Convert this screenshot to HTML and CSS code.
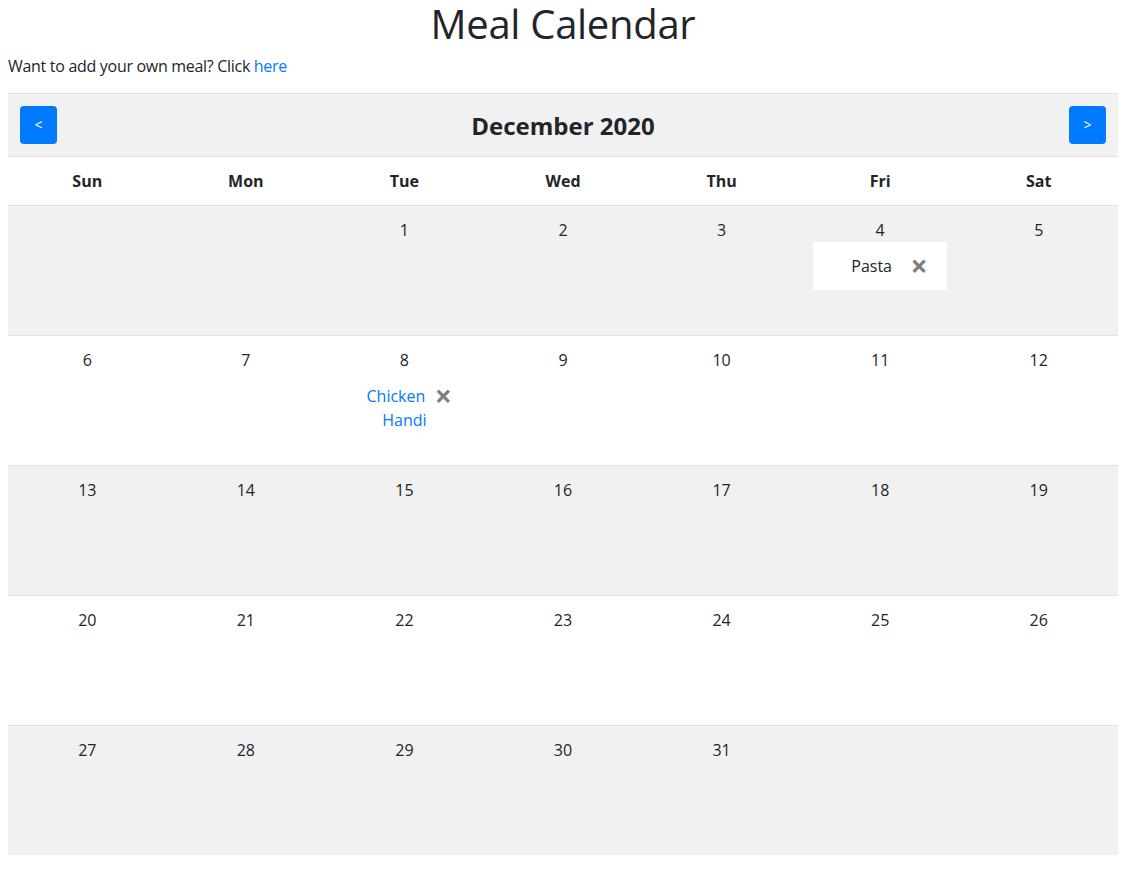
FILE: index.html
```html
<!DOCTYPE html>
<html lang="en">
<head>
<meta charset="utf-8">
<title>Meal Calendar</title>
<link rel="stylesheet" href="styles.css">
</head>
<body>
<h1 class="title">Meal Calendar</h1>
<p class="intro">Want to add your own meal? Click <a href="#" class="link">here</a></p>
<div class="calendar">
  <div class="cal-header">
    <button class="nav-btn" type="button">&lt;</button>
    <h2 class="month">December 2020</h2>
    <button class="nav-btn" type="button">&gt;</button>
  </div>
  <div class="weekdays">
    <div class="weekday">Sun</div>
    <div class="weekday">Mon</div>
    <div class="weekday">Tue</div>
    <div class="weekday">Wed</div>
    <div class="weekday">Thu</div>
    <div class="weekday">Fri</div>
    <div class="weekday">Sat</div>
  </div>
  <div class="week shaded">
    <div class="day"></div>
    <div class="day"></div>
    <div class="day"><div class="date">1</div></div>
    <div class="day"><div class="date">2</div></div>
    <div class="day"><div class="date">3</div></div>
    <div class="day"><div class="date">4</div>
      <div class="meal"><button class="close" type="button">&times;</button><span class="meal-name">Pasta</span></div>
    </div>
    <div class="day"><div class="date">5</div></div>
  </div>
  <div class="week">
    <div class="day"><div class="date">6</div></div>
    <div class="day"><div class="date">7</div></div>
    <div class="day"><div class="date">8</div>
      <div class="meal"><button class="close" type="button">&times;</button><a href="#" class="link meal-name">Chicken Handi</a></div>
    </div>
    <div class="day"><div class="date">9</div></div>
    <div class="day"><div class="date">10</div></div>
    <div class="day"><div class="date">11</div></div>
    <div class="day"><div class="date">12</div></div>
  </div>
  <div class="week shaded">
    <div class="day"><div class="date">13</div></div>
    <div class="day"><div class="date">14</div></div>
    <div class="day"><div class="date">15</div></div>
    <div class="day"><div class="date">16</div></div>
    <div class="day"><div class="date">17</div></div>
    <div class="day"><div class="date">18</div></div>
    <div class="day"><div class="date">19</div></div>
  </div>
  <div class="week">
    <div class="day"><div class="date">20</div></div>
    <div class="day"><div class="date">21</div></div>
    <div class="day"><div class="date">22</div></div>
    <div class="day"><div class="date">23</div></div>
    <div class="day"><div class="date">24</div></div>
    <div class="day"><div class="date">25</div></div>
    <div class="day"><div class="date">26</div></div>
  </div>
  <div class="week shaded">
    <div class="day"><div class="date">27</div></div>
    <div class="day"><div class="date">28</div></div>
    <div class="day"><div class="date">29</div></div>
    <div class="day"><div class="date">30</div></div>
    <div class="day"><div class="date">31</div></div>
    <div class="day"></div>
    <div class="day"></div>
  </div>
</div>
</body>
</html>
```
FILE: styles.css
```css
html, body {
  background: #fff;
}
body {
  margin: 0 11px 0 8px;
  font-family: "Segoe UI", "Open Sans", "Noto Sans", sans-serif;
  font-size: 16px;
  line-height: 1.5;
  color: #212529;
}
.title {
  margin: 0;
  text-align: center;
  font-size: 40px;
  font-weight: 500;
  line-height: 48px;
  letter-spacing: -0.3px;
}
.intro {
  margin: 6px 0 15px;
  letter-spacing: -0.3px;
}
.link {
  color: #007bff;
  text-decoration: none;
}
.calendar {
  width: 1110px;
}
.cal-header {
  display: flex;
  align-items: center;
  justify-content: space-between;
  padding: 12px;
  background: #f1f1f1;
  border-top: 1px solid #dee2e6;
  border-bottom: 1px solid #dee2e6;
}
.nav-btn {
  width: 37px;
  height: 38px;
  padding: 0;
  border: none;
  border-radius: 4px;
  background: #007bff;
  color: #fff;
  font-family: inherit;
  font-size: 14px;
  line-height: 1;
  cursor: pointer;
}
.month {
  margin: 0;
  padding-top: 2px;
  font-size: 24px;
  font-weight: 700;
  line-height: 1.2;
}
.weekdays {
  display: grid;
  grid-template-columns: repeat(7, 1fr);
}
.weekday {
  padding: 12px;
  text-align: center;
  font-weight: 700;
}
.week {
  display: grid;
  grid-template-columns: repeat(7, 1fr);
  height: 130px;
  box-sizing: border-box;
  border-top: 1px solid #dee2e6;
}
.week.shaded {
  background: #f1f1f1;
}
.day {
  padding: 12px;
  text-align: center;
  min-width: 0;
}
.date {
  line-height: 24px;
}
.meal {
  background: #fff;
  padding: 12px 20px;
  text-align: center;
}
.close {
  float: right;
  width: 17px;
  height: 24px;
  padding: 0;
  border: none;
  background: transparent;
  font-family: inherit;
  font-size: 30px;
  font-weight: 700;
  line-height: 24px;
  color: #000;
  opacity: .5;
  cursor: pointer;
}
```
